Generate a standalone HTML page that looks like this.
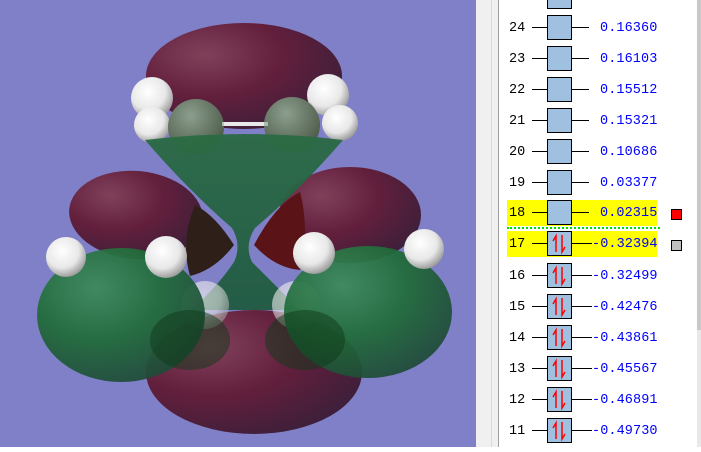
<!DOCTYPE html>
<html><head><style>
html,body{margin:0;padding:0;width:701px;height:447px;overflow:hidden;background:#fff}
#left{position:absolute;left:0;top:0;width:476px;height:447px;background:#8080c8}
#strip{position:absolute;left:476px;top:0;width:22px;height:447px;background:#f0f0f0;border-right:1px solid #a0a0a0}
#strip:before{content:"";position:absolute;left:15px;top:0;width:1px;height:447px;background:#d8d8d8}
#panel{position:absolute;left:499px;top:0;width:202px;height:447px;background:#fff}
#sb{position:absolute;left:697px;top:0;width:4px;height:447px;background:#e8e8e8}
#sb div{position:absolute;left:0;top:0;width:4px;height:330px;background:#c8c8c8}
.row{position:absolute;left:0;width:202px;height:26px;font-family:"Liberation Mono",monospace;font-size:13.5px}
.hl{position:absolute;left:8px;top:0;width:150px;height:26px;background:#ffff00}
.num{position:absolute;left:10px;top:6px;color:#000}
.ll{position:absolute;left:33px;top:12px;width:15px;height:1px;background:#000}
.rl{position:absolute;left:73px;top:12px;width:17px;height:1px;background:#000}
.box{position:absolute;left:48px;top:0;width:23px;height:23px;border:1px solid #000;background:#a0c0e0}
.val{position:absolute;left:101px;top:6px;color:#0000ff;letter-spacing:0.1px}
.neg{left:93px}
.sq{position:absolute;left:172px;top:9px;width:9px;height:9px;border:1px solid #000}
</style></head><body>
<div id="left">
<svg width="476" height="447" viewBox="0 0 476 447">
<defs>
<radialGradient id="mr" cx="0.3" cy="0.3" r="0.8"><stop offset="0" stop-color="#80405a"/><stop offset="0.5" stop-color="#621f3c"/><stop offset="1" stop-color="#3c1f3a"/></radialGradient>
<radialGradient id="gr" cx="0.35" cy="0.3" r="0.8"><stop offset="0" stop-color="#3c8a5a"/><stop offset="0.5" stop-color="#1f6a38"/><stop offset="1" stop-color="#1f4538"/></radialGradient>
<radialGradient id="wh" cx="0.4" cy="0.35" r="0.7"><stop offset="0" stop-color="#ffffff"/><stop offset="0.6" stop-color="#e8e8e8"/><stop offset="1" stop-color="#909090"/></radialGradient>
<radialGradient id="gy" cx="0.4" cy="0.3" r="0.7"><stop offset="0" stop-color="#c0b8b8"/><stop offset="1" stop-color="#605050"/></radialGradient>
<linearGradient id="hg" x1="0" y1="0" x2="0" y2="1"><stop offset="0" stop-color="#2a6a44"/><stop offset="1" stop-color="#1f5a40"/></linearGradient>
</defs>
<ellipse cx="244" cy="76" rx="98" ry="53" fill="url(#mr)"/>
<ellipse cx="136" cy="215" rx="67" ry="44" fill="url(#mr)" transform="rotate(5 136 215)"/>
<ellipse cx="350" cy="215" rx="71" ry="48" fill="url(#mr)"/>
<circle cx="152" cy="98" r="21" fill="url(#wh)"/>
<circle cx="328" cy="95" r="21" fill="url(#wh)"/>
<circle cx="152" cy="125" r="18" fill="url(#wh)"/>
<circle cx="340" cy="123" r="18" fill="url(#wh)"/>
<circle cx="196" cy="127" r="28" fill="url(#gy)"/>
<circle cx="292" cy="125" r="28" fill="url(#gy)"/>
<rect x="222" y="122" width="46" height="4" fill="#e8e8e8"/>
<path d="M145 140 Q244 128 343 140 Q300 190 255 228 Q244 245 252 262 Q280 290 300 310 L190 310 Q215 290 234 262 Q242 245 232 228 Q188 190 145 140Z" fill="url(#hg)" opacity="0.95"/>
<circle cx="196" cy="127" r="28" fill="#2a7040" opacity="0.35"/>
<circle cx="292" cy="125" r="28" fill="#2a7040" opacity="0.35"/>
<path d="M195 205 Q215 215 234 245 Q215 270 190 276 Q180 240 195 205 Z" fill="#2e2018"/>
<path d="M300 192 Q275 205 254 245 Q275 268 300 270 Q310 230 300 192 Z" fill="#5a1418"/>
<ellipse cx="254" cy="372" rx="108" ry="62" fill="url(#mr)"/>
<circle cx="205" cy="305" r="24" fill="url(#wh)" opacity="0.6"/>
<circle cx="296" cy="305" r="24" fill="url(#wh)" opacity="0.6"/>
<ellipse cx="121" cy="315" rx="84" ry="67" fill="url(#gr)" opacity="0.93"/>
<ellipse cx="368" cy="312" rx="84" ry="66" fill="url(#gr)" opacity="0.93"/>
<circle cx="66" cy="257" r="20" fill="url(#wh)"/>
<circle cx="166" cy="257" r="21" fill="url(#wh)"/>
<circle cx="314" cy="253" r="21" fill="url(#wh)"/>
<circle cx="424" cy="249" r="20" fill="url(#wh)"/>
<ellipse cx="190" cy="340" rx="40" ry="30" fill="#0e3a18" opacity="0.5"/>
<ellipse cx="305" cy="340" rx="40" ry="30" fill="#0e3a18" opacity="0.5"/>
</svg>
</div>
<div id="strip"></div>
<div id="panel">
<div class="row" style="top:-16px"><span class="num">25</span><div class="ll"></div><div class="box"></div><div class="rl"></div><span class="val">0.20000</span></div>
<div class="row" style="top:15px"><span class="num">24</span><div class="ll"></div><div class="box"></div><div class="rl"></div><span class="val">0.16360</span></div>
<div class="row" style="top:46px"><span class="num">23</span><div class="ll"></div><div class="box"></div><div class="rl"></div><span class="val">0.16103</span></div>
<div class="row" style="top:77px"><span class="num">22</span><div class="ll"></div><div class="box"></div><div class="rl"></div><span class="val">0.15512</span></div>
<div class="row" style="top:108px"><span class="num">21</span><div class="ll"></div><div class="box"></div><div class="rl"></div><span class="val">0.15321</span></div>
<div class="row" style="top:139px"><span class="num">20</span><div class="ll"></div><div class="box"></div><div class="rl"></div><span class="val">0.10686</span></div>
<div class="row" style="top:170px"><span class="num">19</span><div class="ll"></div><div class="box"></div><div class="rl"></div><span class="val">0.03377</span></div>
<div class="row" style="top:200px"><div class="hl"></div><span class="num">18</span><div class="ll"></div><div class="box"></div><div class="rl"></div><span class="val">0.02315</span><div class="sq" style="background:#f00"></div></div>
<div style="position:absolute;left:8px;top:227px;width:153px;border-top:2px dotted #00e000"></div>
<div class="row" style="top:231px"><div class="hl"></div><span class="num">17</span><div class="ll"></div><div class="box"><svg width="23" height="23"><path d="M8 20V4l-3 5" stroke="#f00" stroke-width="1.5" fill="none"/><path d="M14 3v17l3-5" stroke="#f00" stroke-width="1.5" fill="none"/></svg></div><div class="rl" style="width:20px"></div><span class="val neg">-0.32394</span><div class="sq" style="background:#c0c0c0"></div></div>
<div class="row" style="top:263px"><span class="num">16</span><div class="ll"></div><div class="box"><svg width="23" height="23"><path d="M8 20V4l-3 5" stroke="#f00" stroke-width="1.5" fill="none"/><path d="M14 3v17l3-5" stroke="#f00" stroke-width="1.5" fill="none"/></svg></div><div class="rl" style="width:20px"></div><span class="val neg">-0.32499</span></div>
<div class="row" style="top:294px"><span class="num">15</span><div class="ll"></div><div class="box"><svg width="23" height="23"><path d="M8 20V4l-3 5" stroke="#f00" stroke-width="1.5" fill="none"/><path d="M14 3v17l3-5" stroke="#f00" stroke-width="1.5" fill="none"/></svg></div><div class="rl" style="width:20px"></div><span class="val neg">-0.42476</span></div>
<div class="row" style="top:325px"><span class="num">14</span><div class="ll"></div><div class="box"><svg width="23" height="23"><path d="M8 20V4l-3 5" stroke="#f00" stroke-width="1.5" fill="none"/><path d="M14 3v17l3-5" stroke="#f00" stroke-width="1.5" fill="none"/></svg></div><div class="rl" style="width:20px"></div><span class="val neg">-0.43861</span></div>
<div class="row" style="top:356px"><span class="num">13</span><div class="ll"></div><div class="box"><svg width="23" height="23"><path d="M8 20V4l-3 5" stroke="#f00" stroke-width="1.5" fill="none"/><path d="M14 3v17l3-5" stroke="#f00" stroke-width="1.5" fill="none"/></svg></div><div class="rl" style="width:20px"></div><span class="val neg">-0.45567</span></div>
<div class="row" style="top:387px"><span class="num">12</span><div class="ll"></div><div class="box"><svg width="23" height="23"><path d="M8 20V4l-3 5" stroke="#f00" stroke-width="1.5" fill="none"/><path d="M14 3v17l3-5" stroke="#f00" stroke-width="1.5" fill="none"/></svg></div><div class="rl" style="width:20px"></div><span class="val neg">-0.46891</span></div>
<div class="row" style="top:418px"><span class="num">11</span><div class="ll"></div><div class="box"><svg width="23" height="23"><path d="M8 20V4l-3 5" stroke="#f00" stroke-width="1.5" fill="none"/><path d="M14 3v17l3-5" stroke="#f00" stroke-width="1.5" fill="none"/></svg></div><div class="rl" style="width:20px"></div><span class="val neg">-0.49730</span></div>
</div>
<div id="sb"><div></div></div>
</body></html>
